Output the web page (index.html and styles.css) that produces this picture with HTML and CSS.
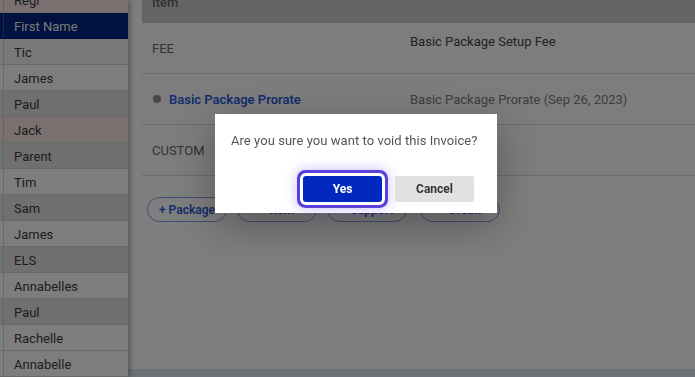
FILE: index.html
```html
<!DOCTYPE html>
<html lang="en">
<head>
<meta charset="UTF-8" />
<meta name="viewport" content="width=device-width, initial-scale=1" />
<title>Invoice Items</title>
<link rel="stylesheet" href="styles.css">
</head>
<body>
<div class="page">
  <aside class="sidebar">
    <ul class="people">
      <li class="pink">Regi</li>
      <li class="active">First Name</li>
      <li class="mid">Tic</li>
      <li class="light">James</li>
      <li class="dark">Paul</li>
      <li class="pink">Jack</li>
      <li class="dark">Parent</li>
      <li class="light">Tim</li>
      <li class="dark">Sam</li>
      <li class="light">James</li>
      <li class="dark">ELS</li>
      <li class="light">Annabelles</li>
      <li class="dark">Paul</li>
      <li class="light">Rachelle</li>
      <li class="light">Annabelle</li>
    </ul>
  </aside>

  <main class="content">
    <div class="items">
      <div class="items-head">
        <div class="col-item">Item</div>
        <div class="col-desc">Description</div>
      </div>
      <div class="items-row">
        <div class="col-item">FEE</div>
        <div class="col-desc top">Basic Package Setup Fee</div>
      </div>
      <div class="items-row">
        <div class="col-item"><span class="dot"></span><a class="item-link" href="#">Basic Package Prorate</a></div>
        <div class="col-desc muted">Basic Package Prorate (Sep 26, 2023)</div>
      </div>
      <div class="items-row">
        <div class="col-item">CUSTOM</div>
        <div class="col-desc"></div>
      </div>
    </div>

    <div class="pills">
      <button class="pill">+ Package</button>
      <button class="pill">+ Item</button>
      <button class="pill">+ Support</button>
      <button class="pill">+ Credit</button>
    </div>

    <div class="footer-strip"></div>
  </main>
</div>

<div class="overlay"></div>

<div class="dialog">
  <p class="dialog-text">Are you sure you want to void this Invoice?</p>
  <div class="dialog-actions">
    <button class="btn btn-yes">Yes</button>
    <button class="btn btn-cancel">Cancel</button>
  </div>
</div>
</body>
</html>
```

FILE: styles.css
```css
* { box-sizing: border-box; }
html, body {
  margin: 0; padding: 0;
  height: 100%;
  overflow: hidden;
}
body {
  font-family: Roboto, 'Noto Sans', Arial, sans-serif;
  font-size: 13px;
  color: #333;
  background: #fff;
}
.page {
  display: flex;
  height: 100vh;
}

/* left list */
.sidebar {
  width: 128px;
  flex-shrink: 0;
  background: #f2f2f2;
  box-shadow: 2px 0 6px rgba(0,0,0,0.35);
  position: relative;
  z-index: 1;
  overflow: hidden;
}
.people {
  list-style: none;
  margin: -13px 0 0 0;
  padding: 0;
}
.people li {
  height: 26px;
  line-height: 27px;
  padding-left: 14px;
  border-bottom: 1px solid #d2d2d2;
  color: #3a3a3a;
  font-size: 13px;
}
.people li.light { background: linear-gradient(to right, transparent 3px, #cfcfcf 3px, #cfcfcf 4px, transparent 4px), #fbfbfb; }
.people li.mid { background: linear-gradient(to right, transparent 3px, #cfcfcf 3px, #cfcfcf 4px, transparent 4px), #f1f1f1; }
.people li.dark { background: linear-gradient(to right, transparent 3px, #c8c8c8 3px, #c8c8c8 4px, transparent 4px), #e0e0e0; }
.people li.pink { background: linear-gradient(to right, transparent 3px, #cfc4c4 3px, #cfc4c4 4px, transparent 4px), #f6e1e1; }
.people li.active {
  background: linear-gradient(to right, transparent 3px, #3a4f8a 3px, #3a4f8a 4px, transparent 4px), #022381;
  color: #f0f0f0;
  border-bottom-color: #022381;
}

/* main */
.content {
  flex: 1;
  display: flex;
  flex-direction: column;
  background: #fdfdfd;
  padding-left: 14px;
}
.items {
  margin-top: -13px;
  background: #fbfbfb;
}
.items-head, .items-row {
  display: grid;
  grid-template-columns: 268px 1fr;
}
.items-head {
  height: 36px;
  background: #c8c8c8;
  font-weight: 500;
  color: #222;
  overflow: hidden;
}
.items-head > div { margin-top: -6px; }
.items-row {
  height: 51px;
  border-bottom: 1px solid #d6d6d6;
  align-items: center;
}
.col-item {
  padding-left: 10px;
  display: flex;
  align-items: center;
  color: #666;
}
.col-desc { color: #4a4a4a; }
.col-desc.top { align-self: start; padding-top: 11px; color: #444; }
.col-desc.muted { color: #7c7c7c; }
.dot {
  width: 8px; height: 8px;
  border-radius: 50%;
  background: #8e8e96;
  margin: 0 8px 0 1px;
}
.item-link {
  color: #2a5bd8;
  font-weight: 600;
  text-decoration: none;
}

.pills {
  display: flex;
  gap: 10px;
  padding: 21px 0 0 5px;
}
.pill {
  width: 80px;
  height: 25px;
  border: 1px solid #7f9ce8;
  border-radius: 13px;
  background: transparent;
  color: #2a58d8;
  font-family: inherit;
  font-size: 12px;
  font-weight: 600;
  padding: 0;
  white-space: nowrap;
  overflow: hidden;
}
.pill + .pill + .pill + .pill { margin-left: 3px; }
.footer-strip {
  margin-top: auto;
  margin-left: -14px;
  height: 8px;
  background: #dde2ef;
}

/* overlay + dialog */
.overlay {
  position: fixed;
  inset: 0;
  background: rgba(0,0,0,0.5);
  z-index: 5;
}
.dialog {
  position: absolute;
  left: 215px;
  top: 114px;
  width: 282px;
  height: 99px;
  background: #fff;
  z-index: 6;
  box-shadow: 0 12px 40px rgba(0,0,0,0.3);
  padding: 19px 0 0 16px;
}
.dialog-text {
  margin: 0;
  font-size: 13px;
  color: #555;
  letter-spacing: 0.05px;
}
.dialog-actions {
  display: flex;
  gap: 13px;
  padding: 28px 0 0 72px;
}
.btn {
  height: 26px;
  border: none;
  border-radius: 2px;
  font-family: inherit;
  font-size: 12px;
  font-weight: 700;
  cursor: pointer;
}
.btn-yes {
  width: 79px;
  background: #0128bf;
  color: #fff;
  box-shadow: 0 0 0 3px #fff, 0 0 0 6px #5a40d8, 0 0 12px 7px rgba(120,90,255,0.35);
  border-radius: 3px;
}
.btn-cancel {
  width: 79px;
  background: #e1e1e1;
  color: #333;
}
```
